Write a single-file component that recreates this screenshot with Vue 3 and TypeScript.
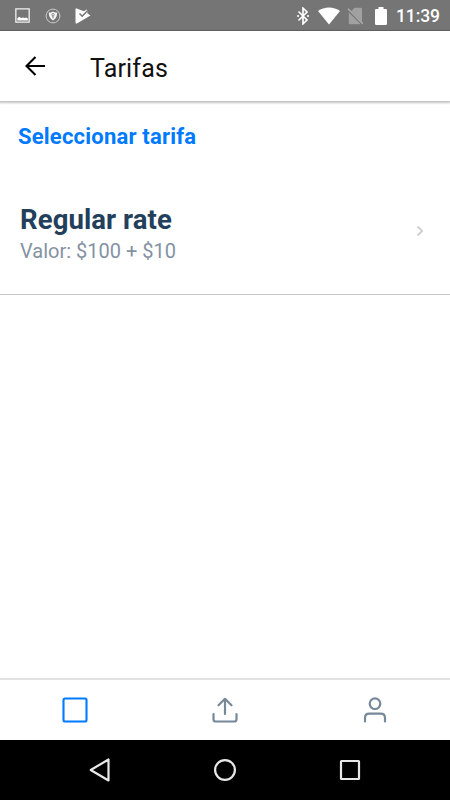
<script setup lang="ts">
interface Rate {
  name: string
  price: string
}

const rates: Rate[] = [{ name: 'Regular rate', price: 'Valor: $100 + $10' }]
</script>

<template>
  <div class="screen">
    <div class="status">
      <div class="notifications">
        <svg width="15" height="15" viewBox="0 0 16 16">
          <path d="M.9.9h14.2v14.2H.9z" fill="none" stroke="#f2f2f2" stroke-width="1.4" />
          <path d="M2.500 13.300V10.800l2-1.600 2 1.400L8.500 10l2 .6 1.400-.6 1.800 1.300v2z" fill="#fff" />
        </svg>
        <svg width="16" height="16" viewBox="0 0 16 16">
          <circle cx="8" cy="8" r="6.900" fill="none" stroke="#ccc" stroke-width="1" />
          <path d="M8 3.400c1.400.9 2.700 1.100 4.200 1.200 0 3.800-1.200 6.200-4.200 7.800-3-1.600-4.200-4-4.200-7.800C5.300 4.500 6.600 4.300 8 3.400z" fill="#f5f5f5" />
          <circle cx="8" cy="6.700" r="1.200" fill="none" stroke="#757575" stroke-width=".8" />
          <path d="M8 8v2.300" stroke="#757575" stroke-width="1" />
        </svg>
        <svg width="16" height="18" viewBox="0 0 16 18">
          <path d="M1 1.200 9 4.200 11.500 2.500 13 4.700 12 6l3.500 2.400L1.500 16.800.500 16V2z" fill="#fff" />
          <path d="m4.500 6.500 2.700 2.700 5.300-5.400" fill="none" stroke="#757575" stroke-width="1.500" />
        </svg>
      </div>
      <div class="system">
        <svg width="12" height="18" viewBox="0 0 12 18">
          <path d="m1.500 4.500 8.500 8.500-4 3.800V1.200L10 5l-8.500 8.500" fill="none" stroke="#fff" stroke-width="1.700" />
          <path d="M.2 8h1.600v2H.2zm10 0h1.600v2h-1.600z" fill="#fff" />
        </svg>
        <svg class="wifi" width="22" height="18" viewBox="0 0 22 18">
          <path d="M0 4C6-.7 16-.7 22 4L11 17.500z" fill="#fff" />
        </svg>
        <svg class="sim" width="17" height="18" viewBox="0 0 17 18">
          <path d="M4.500 4 7.500.700h6.200q1.300 0 1.300 1.300v12.900zM1.800 5.400 13.700 17.300H3.200q-1.400 0-1.400-1.400z" fill="#a1a1a1" />
          <path d="m1 1.800 14.800 15" stroke="#acacac" stroke-width="1.500" />
        </svg>
        <svg class="battery" width="12" height="18" viewBox="0 0 12 18">
          <path d="M3.500 0h5v2h2.300q1.200 0 1.200 1.200v13.600q0 1.200-1.200 1.200H1.200Q0 18 0 16.800V3.200Q0 2 1.200 2h2.300z" fill="#fff" />
        </svg>
        <span class="clock">11:39</span>
      </div>
    </div>

    <header class="toolbar">
      <svg width="20" height="20" viewBox="0 0 20 20" fill="none" stroke="#000" stroke-width="2.100">
        <path d="M20 10H2M10.500.900 1.500 10l9 9" />
      </svg>
      <h1>Tarifas</h1>
    </header>

    <main>
      <h2>Seleccionar tarifa</h2>
      <div v-for="rate in rates" :key="rate.name" class="rate">
        <div class="details">
          <div class="name">{{ rate.name }}</div>
          <div class="price">{{ rate.price }}</div>
        </div>
        <svg width="8" height="12" viewBox="0 0 8 12" fill="none" stroke="#c7c7cc" stroke-width="1.700">
          <path d="m1.500 1.500 4.500 4.500-4.500 4.500" />
        </svg>
      </div>
    </main>

    <nav class="tabs">
      <svg width="26" height="26" viewBox="0 0 26 26" fill="none" stroke="#007aff" stroke-width="2.100">
        <rect x="1.500" y="1.500" width="23" height="23" rx="1.500" />
      </svg>
      <svg width="26" height="26" viewBox="0 0 26 26" fill="none" stroke="#778899" stroke-width="2.200" stroke-linecap="round" stroke-linejoin="round">
        <path d="M13 17V2M6.500 8.300 13 1.800l6.500 6.500M1.500 17v5.200q0 2.300 2.300 2.300h18.400q2.300 0 2.300-2.300V17" />
      </svg>
      <svg width="26" height="26" viewBox="0 0 26 26" fill="none" stroke="#778899" stroke-width="2.200" stroke-linecap="round">
        <circle cx="13" cy="6.700" r="5.300" />
        <path d="M3 24.500V21q0-4.300 4.300-4.300h11.400Q23 16.700 23 21v3.500" />
      </svg>
    </nav>

    <div class="system-nav">
      <svg width="24" height="24" viewBox="0 0 24 24"><path d="M20.500 1.500v21L2.700 12z" /></svg>
      <svg width="24" height="24" viewBox="0 0 24 24"><circle cx="12" cy="12" r="9.900" /></svg>
      <svg width="24" height="24" viewBox="0 0 24 24"><rect x="3" y="3" width="18" height="18" rx=".5" /></svg>
    </div>
  </div>
</template>

<style>
body {
  margin: 0;
  background: #fff;
}
</style>

<style scoped>
.screen {
  display: flex;
  flex-direction: column;
  width: 450px;
  height: 800px;
  background: #fff;
  font-family: Roboto, sans-serif;
  overflow: hidden;
}
svg {
  display: block;
  flex: none;
}
h1, h2 {
  margin: 0;
}
.status {
  display: flex;
  justify-content: space-between;
  box-sizing: border-box;
  height: 31px;
  padding: 1px 10px 0 15px;
  background: #757575;
  border-bottom: 1px solid #686868;
}
.notifications, .system {
  display: flex;
  align-items: center;
}
.notifications {
  gap: 14.500px;
}
.wifi {
  margin-left: 9px;
}
.sim {
  margin-left: 7px;
}
.battery {
  margin-left: 11px;
}
.clock {
  width: 44px;
  margin-left: 9px;
  padding-top: 2px;
  color: #fff;
  font-size: 17.500px;
  font-weight: 500;
  letter-spacing: -0.100px;
  line-height: 27px;
  white-space: nowrap;
}
.toolbar {
  display: flex;
  align-items: center;
  box-sizing: border-box;
  height: 70px;
  padding: 2px 25px 0;
  background: #fff;
  box-shadow: 0 1px 2px 1px rgba(0, 0, 0, 0.24);
}
.toolbar svg {
  margin-bottom: 3px;
}
.toolbar h1 {
  margin-left: 45px;
  padding-top: 3px;
  color: #111;
  font-size: 25px;
  font-weight: 400;
  letter-spacing: 0.150px;
  line-height: 30px;
}
main {
  flex: 1;
}
h2 {
  padding: 21px 18px 0;
  color: #007aff;
  font-size: 22px;
  font-weight: 700;
  letter-spacing: 0.200px;
  line-height: 29px;
}
.rate {
  display: flex;
  align-items: center;
  justify-content: space-between;
  box-sizing: border-box;
  height: 127px;
  margin-top: 17px;
  padding: 0 26px 0 20px;
  border-bottom: 1px solid #c8c8cc;
}
.details {
  padding-top: 7px;
}
.name {
  color: #233f5b;
  font-size: 27.500px;
  font-weight: 700;
  letter-spacing: 0.080px;
  line-height: 34px;
}
.price {
  color: #8492a3;
  font-size: 20px;
  line-height: 29px;
}
.tabs, .system-nav {
  display: grid;
  align-items: center;
  justify-items: center;
  box-sizing: border-box;
}
.tabs {
  grid-template-columns: repeat(3, 1fr);
  height: 62px;
  padding-bottom: 1px;
  border-top: 2px solid #e2e2e2;
}
.system-nav {
  grid-template-columns: repeat(3, 125px);
  justify-content: center;
  height: 60px;
  background: #000;
}
.system-nav svg {
  fill: none;
  stroke: #e8e8e8;
  stroke-width: 2.200;
  stroke-linejoin: round;
}
</style>
